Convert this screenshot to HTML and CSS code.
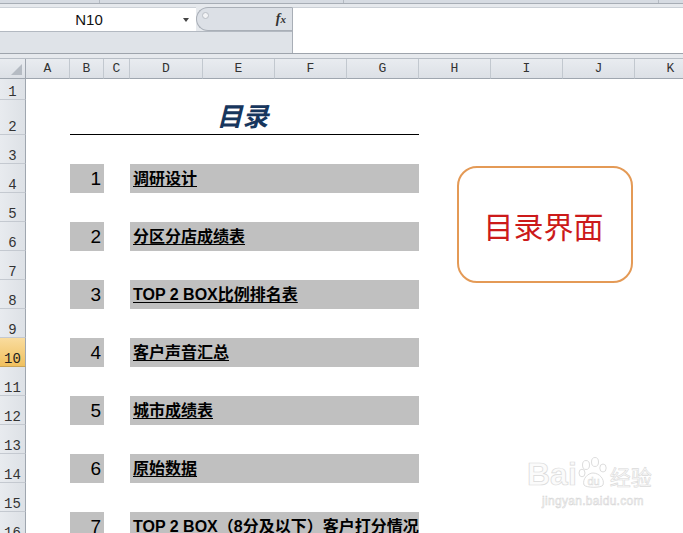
FILE: index.html
```html
<!DOCTYPE html>
<html>
<head>
<meta charset="utf-8">
<link rel="stylesheet" href="styles.css">
</head>
<body>
<div class="app">
  <div class="strip"><span class="s1"></span><span class="s2"></span><span class="s3"></span><span class="s4"></span></div>
  <div class="fbar">
    <div class="fleft">
      <div class="namerow">
        <div class="namebox"><span class="name">N10</span><span class="arrow"></span></div>
        <div class="pill"><span class="grip"></span><span class="fx"><i class="f">f</i><i class="x">x</i></span></div>
      </div>
      <div class="band"></div>
    </div>
    <div class="finput"></div>
  </div>
  <div class="sep"></div>
  <div class="sheet">
    <div class="grow head">
      <div class="corner"><span class="tri"></span></div>
      <div class="ch">A</div><div class="ch">B</div><div class="ch">C</div><div class="ch">D</div><div class="ch">E</div><div class="ch">F</div><div class="ch">G</div><div class="ch">H</div><div class="ch">I</div><div class="ch">J</div><div class="ch">K</div>
    </div>
    <div class="grow short"><div class="rh">1</div></div>
    <div class="grow tall"><div class="rh">2</div><div></div><div class="title">目录</div></div>
    <div class="grow"><div class="rh">3</div></div>
    <div class="grow"><div class="rh">4</div><div></div><div class="num">1</div><div></div><div class="item"><u>调研设计</u></div></div>
    <div class="grow"><div class="rh">5</div></div>
    <div class="grow"><div class="rh">6</div><div></div><div class="num">2</div><div></div><div class="item"><u>分区分店成绩表</u></div></div>
    <div class="grow"><div class="rh">7</div></div>
    <div class="grow"><div class="rh">8</div><div></div><div class="num">3</div><div></div><div class="item"><u>TOP 2 BOX比例排名表</u></div></div>
    <div class="grow"><div class="rh">9</div></div>
    <div class="grow"><div class="rh active">10</div><div></div><div class="num">4</div><div></div><div class="item"><u>客户声音汇总</u></div></div>
    <div class="grow"><div class="rh">11</div></div>
    <div class="grow"><div class="rh">12</div><div></div><div class="num">5</div><div></div><div class="item"><u>城市成绩表</u></div></div>
    <div class="grow"><div class="rh">13</div></div>
    <div class="grow"><div class="rh">14</div><div></div><div class="num">6</div><div></div><div class="item"><u>原始数据</u></div></div>
    <div class="grow"><div class="rh">15</div></div>
    <div class="grow"><div class="rh">16</div><div></div><div class="num">7</div><div></div><div class="item"><u>TOP 2 BOX（8分及以下）客户打分情况</u></div></div>

    <div class="callout">目录界面</div>

    <div class="watermark">
      <div class="wm-top">
        <span class="wm-bai">Bai</span>
        <svg class="paw" width="30" height="32" viewBox="0 0 30 32">
          <g fill="none" stroke="#dddddd" stroke-width="1">
            <ellipse cx="8" cy="8" rx="3.5" ry="4.5"/>
            <ellipse cx="17" cy="5" rx="3.5" ry="4.5"/>
            <ellipse cx="25" cy="11" rx="3.2" ry="4"/>
            <ellipse cx="4" cy="16" rx="3" ry="3.8"/>
            <path d="M6 28 C4 22 10 16 15 16 C21 16 27 22 25 28 C24 31 8 31 6 28 Z"/>
          </g>
          <text x="15.5" y="28" text-anchor="middle" class="wm-du">du</text>
        </svg>
        <span class="wm-jy">经验</span>
      </div>
      <div class="wm-url">jingyan.baidu.com</div>
    </div>
  </div>
</div>
</body>
</html>
```

FILE: styles.css
```css
* { box-sizing: border-box; margin: 0; padding: 0; }
html, body { width: 683px; height: 533px; overflow: hidden; background: #fff; }
body { font-family: "Liberation Sans", Arial, "Noto Sans CJK SC", sans-serif; }

.app { width: 683px; height: 533px; overflow: hidden; display: flex; flex-direction: column; }

/* top ribbon remnant */
.strip { flex: none; height: 4px; display: flex; background: #D6DBE2; border-bottom: 1px solid #A7ADB5; }
.strip span { flex: none; height: 100%; border-right: 1px solid #B4BAC2; }
.strip .s1 { width: 100px; }
.strip .s2 { width: 244px; }
.strip .s3 { width: 315px; }
.strip .s4 { flex: 1; border-right: none; }

/* formula bar */
.fbar { flex: none; display: flex; padding-top: 3px; background: #E6E9ED; height: 49px; }
.fleft { width: 292px; flex: none; display: flex; flex-direction: column; }
.namerow { height: 24px; display: flex; }
.namebox { width: 196px; background: #fff; border-top: 1px solid #CDD2D8; display: flex; align-items: center; }
.name { width: 178px; text-align: center; font-size: 15px; color: #111; line-height: 1; }
.arrow { width: 0; height: 0; margin-left: 5px; border-left: 3.5px solid transparent; border-right: 3.5px solid transparent; border-top: 4px solid #444; }
.pill { flex: 1; background: #DCE0E6; border: 1px solid #A9AFB7; border-right: none; border-radius: 12px 0 0 12px; display: flex; align-items: center; justify-content: space-between; padding: 0 6px 0 5px; }
.grip { width: 7px; height: 7px; border-radius: 50%; background: #F2F3F5; border: 1px solid #B9BEC5; align-self: flex-start; margin-top: 4px; }
.fx { font-family: "Liberation Serif", "Times New Roman", serif; font-weight: bold; color: #333; display: flex; align-items: baseline; }
.fx .f { font-size: 14px; }
.fx .x { font-size: 11px; }
.band { flex: 1; background: #DFE3E8; border-top: 1px solid #B3B9C1; }
.finput { flex: 1; background: #fff; border-left: 1px solid #A8AEB6; border-top: 1px solid #CBD0D6; }

.sep { flex: none; height: 6px; background: #E6E9ED; border-top: 1px solid #9EA4AC; border-bottom: 1px solid #B7BDC5; }

/* sheet */
.sheet { flex: none; position: relative; display: flex; flex-direction: column; width: 779px; }
.grow { display: grid; grid-template-columns: 26px 44px 34px 26px 73px 72px 72px 72px 72px 72px 72px 72px; height: 29px; flex: none; }
.grow.head { height: 20px; }
.grow.short { height: 21px; }
.grow.tall { height: 35px; }

.corner { background: linear-gradient(#E9ECF0, #DCE0E6); border-right: 1px solid #9FA6AF; border-bottom: 1px solid #9FA6AF; display: flex; justify-content: flex-end; align-items: flex-end; padding: 0 3px 3px 0; }
.tri { width: 11px; height: 11px; background: #B5BBC3; clip-path: polygon(100% 0, 100% 100%, 0 100%); }
.ch { background: linear-gradient(#E9ECF0, #DCE0E6); border-right: 1px solid #C2C8CF; border-bottom: 1px solid #9FA6AF; display: flex; align-items: center; justify-content: center; font-family: "Liberation Mono", "Courier New", monospace; font-size: 13px; color: #333; line-height: 1; }

.rh { background: linear-gradient(90deg, #E8EBEF, #DDE1E6); border-right: 1px solid #9FA6AF; border-bottom: 1px solid #C4C9D0; display: flex; align-items: flex-end; justify-content: center; font-family: "Liberation Mono", "Courier New", monospace; font-size: 14px; color: #333; line-height: 14px; }
.rh.active { background: linear-gradient(#F9DC9E, #F0C05E); border-bottom-color: #C9A456; color: #222; }

.title { grid-column: span 6; border-bottom: 1px solid #000; display: flex; align-items: center; justify-content: center; font-family: "Liberation Sans", "Noto Sans CJK SC", sans-serif; font-size: 26px; font-weight: bold; font-style: italic; color: #17365D; line-height: 1; padding-right: 4px; }

.num { background: #C0C0C0; display: flex; align-items: center; justify-content: flex-end; padding-right: 3px; font-size: 19px; color: #000; line-height: 1; }
.item { grid-column: span 4; background: #C0C0C0; display: flex; align-items: center; padding-left: 3px; font-family: "Liberation Sans", "Noto Sans CJK SC", sans-serif; font-size: 16px; font-weight: bold; color: #000; line-height: 1; white-space: nowrap; overflow: visible; }
.item u { text-underline-offset: 2px; }

/* overlay shape */
.callout { position: absolute; left: 457px; top: 107px; width: 176px; height: 117px; border: 2.5px solid #E49A56; border-radius: 20px; background: #fff; display: flex; align-items: center; justify-content: center; padding-right: 3px; font-family: "Noto Sans CJK SC", sans-serif; font-size: 30px; font-weight: 400; color: #CC1A1A; }

/* watermark */
.watermark { position: absolute; left: 527px; top: 398px; color: #f6f6f6; }
.wm-top { display: flex; align-items: flex-end; }
.wm-bai { font-family: "Liberation Sans", sans-serif; font-weight: bold; font-size: 32px; line-height: 1; color: #fbfbfb; -webkit-text-stroke: 0.7px #dadada; }
.paw { margin-left: 1px; margin-bottom: 1px; }
.wm-du { font-family: "Liberation Sans", sans-serif; font-size: 11px; fill: #fff; stroke: #dadada; stroke-width: 0.5px; }
.wm-jy { font-family: "Noto Sans CJK SC", sans-serif; font-size: 21px; line-height: 1; color: #fbfbfb; -webkit-text-stroke: 0.6px #dadada; margin-left: 2px; margin-bottom: 3px; }
.wm-url { font-family: "Liberation Sans", sans-serif; font-size: 12px; color: #fbfbfb; -webkit-text-stroke: 0.5px #d4d4d4; margin-left: 15px; margin-top: 4px; letter-spacing: 0.3px; }
```
